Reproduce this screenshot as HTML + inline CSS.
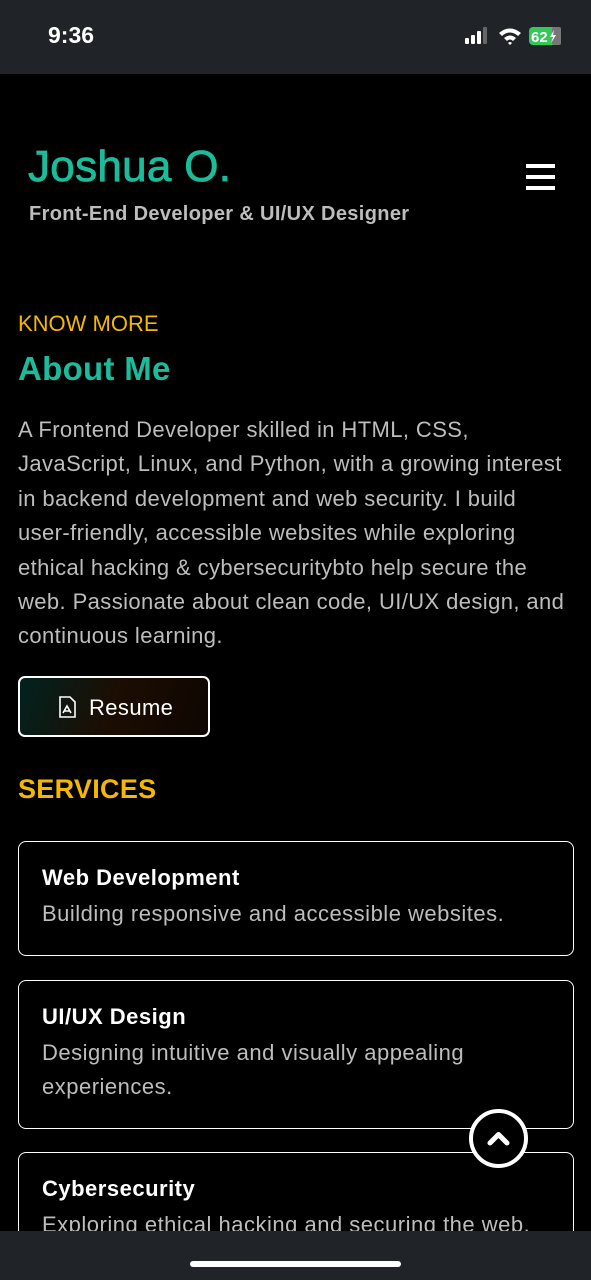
<!DOCTYPE html>
<html><head><meta charset="utf-8"><style>
*{margin:0;padding:0;box-sizing:border-box}
html{overflow:hidden;height:1280px}
body{width:591px;height:1280px;background:#000;font-family:"Liberation Sans",sans-serif;position:relative;overflow:hidden;color:#fff}
.sb{position:absolute;left:0;top:0;width:591px;height:74px;background:#202327}
.time{position:absolute;left:48px;top:22px;font-size:23px;font-weight:bold;color:#fff}
.bb{position:absolute;left:0;top:1231px;width:591px;height:49px;background:#202327}
.hi{position:absolute;left:190px;top:1261px;width:211px;height:6px;border-radius:3px;background:#fff}
.name{position:absolute;left:28px;top:142px;font-size:44px;color:#1abc9c;-webkit-text-stroke:0.8px #1abc9c;letter-spacing:0.3px}
.sub{position:absolute;left:29px;top:203px;font-size:20px;font-weight:bold;color:#bdbdbd;letter-spacing:0.35px}
.ham{position:absolute;left:526px;top:164px;width:29px}
.ham div{height:4px;background:#fff;margin-bottom:7px}
.km{position:absolute;left:18px;top:311px;font-size:22px;color:#f5b700}
.about{position:absolute;left:18px;top:350px;font-size:33px;font-weight:bold;color:#1abc9c;letter-spacing:0.3px}
.p{position:absolute;left:18px;top:413px;width:558px;font-size:22px;letter-spacing:0.4px;line-height:34.4px;color:#bdbdbd}
.btn{position:absolute;left:18px;top:676px;width:192px;height:61px;border:2.5px solid #fff;border-radius:7px;background:linear-gradient(110deg,#02221f,#1c0d02 50%,#0e0602);font-size:22px;color:#fff;letter-spacing:0.4px}
.btn span{position:absolute;left:69px;top:17px}
.btn svg{position:absolute;left:38px;top:18px}
.svc{position:absolute;left:18px;top:774px;font-size:27px;font-weight:bold;color:#f5b700;letter-spacing:0.3px}
.card{position:absolute;left:18px;width:556px;border:1.5px solid #fff;border-radius:8px;padding:23px 23px}
.card h3{font-size:22px;font-weight:bold;color:#fff;margin-bottom:6px;letter-spacing:0.5px}
.card p{font-size:22px;line-height:34px;color:#bdbdbd;letter-spacing:0.5px}
.up{position:absolute;left:469px;top:1109px;width:59px;height:59px;border:4px solid #fff;border-radius:50%;background:#000}
</style></head><body>
<div class="sb"><div class="time">9:36</div>
<svg style="position:absolute;left:465px;top:27px" width="100" height="20">
<rect x="0" y="11" width="4" height="6" rx="1" fill="#fff"/><rect x="6" y="8" width="4" height="9" rx="1" fill="#fff"/><rect x="12" y="4" width="4" height="13" rx="1" fill="#fff"/><rect x="18" y="0" width="4" height="17" rx="1" fill="#666"/>
<path d="M34 6 Q45 -3 56 6 L53 9 Q45 2 37 9Z M39 11 Q45 6 51 11 L48 14 Q45 11 42 14Z M43 16 L45 18 L47 16 Q45 14 43 16Z" fill="#fff"/>
<rect x="64" y="0" width="32" height="18" rx="4" fill="#34c759"/><rect x="87" y="0" width="9" height="18" rx="2" fill="#777"/>
<text x="66" y="15" font-size="15" font-weight="bold" fill="#fff" font-family="Liberation Sans">62</text>
<path d="M89 3 L85 10 H88 L86 16 L91 8 H88Z" fill="#fff"/></svg></div>
<div class="name">Joshua O.</div>
<div class="sub">Front-End Developer &amp; UI/UX Designer</div>
<div class="ham"><div></div><div></div><div></div></div>
<div class="km">KNOW MORE</div>
<div class="about">About Me</div>
<div class="p">A Frontend Developer skilled in HTML, CSS, JavaScript, Linux, and Python, with a growing interest in backend development and web security. I build <span style="white-space:nowrap">user-friendly,</span> accessible websites while exploring ethical hacking &amp; cybersecuritybto help secure the web. Passionate about clean code, UI/UX design, and continuous learning.</div>
<div class="btn"><svg width="18" height="22" viewBox="0 0 18 22" fill="none" stroke="#fff" stroke-width="1.6"><path d="M2 1H12L17 6V21H2Z"/><path d="M5 17 L9 10 L13 17 M6 15 H12"/></svg><span>Resume</span></div>
<div class="svc">SERVICES</div>
<div class="card" style="top:841px;height:115px"><h3>Web Development</h3><p>Building responsive and accessible websites.</p></div>
<div class="card" style="top:980px;height:149px"><h3>UI/UX Design</h3><p>Designing intuitive and visually appealing experiences.</p></div>
<div class="card" style="top:1152px;height:120px"><h3>Cybersecurity</h3><p>Exploring ethical hacking and securing the web.</p></div>
<div class="up"><svg width="51" height="51" viewBox="0 0 51 51"><path d="M17 30 L25.5 21.5 L34 30" fill="none" stroke="#fff" stroke-width="5" stroke-linecap="round" stroke-linejoin="round"/></svg></div>
<div class="bb"></div><div class="hi"></div>
</body></html>
